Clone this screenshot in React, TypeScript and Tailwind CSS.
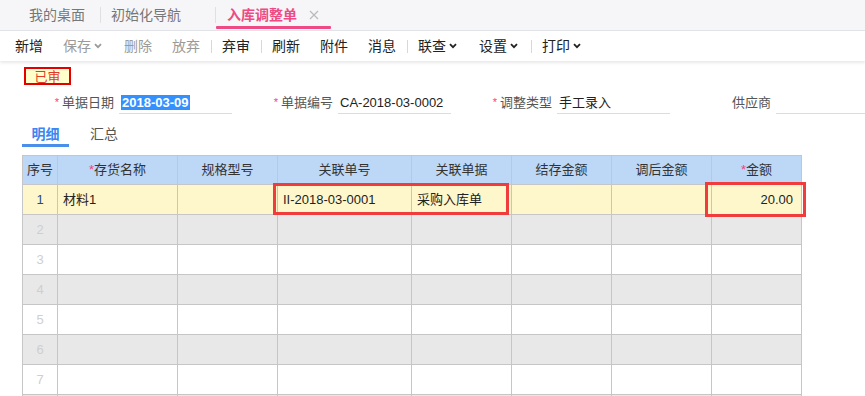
const font = '"Liberation Sans", "Noto Sans CJK SC", sans-serif';

function Chevron() {
  return (
    <svg width="8" height="6" viewBox="0 0 8 6" className="ml-[3px] mr-[2px]">
      <path d="M1 1.2 L4 4.2 L7 1.2" fill="none" stroke="currentColor" strokeWidth="1.8" />
    </svg>
  );
}

type ToolItem = { label: string; disabled?: boolean; menu?: boolean } | 'sep';

const tools: ToolItem[] = [
  { label: '新增' },
  { label: '保存', disabled: true, menu: true },
  { label: '删除', disabled: true },
  { label: '放弃', disabled: true },
  'sep',
  { label: '弃审' },
  'sep',
  { label: '刷新' },
  { label: '附件' },
  { label: '消息' },
  'sep',
  { label: '联查', menu: true },
  { label: '设置', menu: true },
  'sep',
  { label: '打印', menu: true },
];

const columns = [
  { title: '序号', w: 35 },
  { title: '存货名称', w: 120, req: true },
  { title: '规格型号', w: 100 },
  { title: '关联单号', w: 134 },
  { title: '关联单据', w: 100 },
  { title: '结存金额', w: 100 },
  { title: '调后金额', w: 100 },
  { title: '金额', w: 90, req: true },
];

function Field({ label, value, req, selected }: { label: string; value?: string; req?: boolean; selected?: boolean }) {
  return (
    <div className="flex items-center">
      <div className="w-[59px] flex justify-end items-center text-[13px] text-[#555] whitespace-nowrap">
        {req && <span className="text-[#f0457a] text-[11px] mr-[3px] relative top-[-1px]">*</span>}
        <span>{label}</span>
      </div>
      <div className="ml-[5px] w-[113px] h-[22px] border-b border-[#dcdcdc] flex items-center text-[13px] text-[#222] pl-[2px] whitespace-nowrap">
        {value && (
          <span className={selected ? 'bg-[#3390ff] text-white font-bold leading-[15px] px-[1px]' : 'leading-[15px]'}>{value}</span>
        )}
      </div>
    </div>
  );
}

export default function App() {
  const rows = [1, 2, 3, 4, 5, 6, 7, 8];
  return (
    <div className="w-[865px] h-[396px] overflow-hidden bg-white relative" style={{ fontFamily: font }}>
      {/* tab bar */}
      <div className="h-[31px] bg-[#f6f6f8] border-b border-[#e3e3ea] flex items-stretch pl-[29px] text-[14px]">
        <div className="flex items-center text-[#777]">我的桌面</div>
        <div className="w-px h-[16px] bg-[#e0e0e0] self-center ml-[15px]" />
        <div className="flex items-center text-[#777] ml-[10px]">初始化导航</div>
        <div className="w-px h-[16px] bg-[#e0e0e0] self-center ml-[34px]" />
        <div className="relative flex items-center w-[115px] pl-[11px]">
          <span className="text-[#ee4a85] font-bold">入库调整单</span>
          <svg width="10" height="10" viewBox="0 0 10 10" className="ml-[12px]">
            <path d="M1 1 L9 9 M9 1 L1 9" stroke="#bbbbbb" strokeWidth="1.3" />
          </svg>
          <div className="absolute left-0 right-0 bottom-[1px] h-[3px] bg-[#ee4a85] rounded-[1px]" />
        </div>
      </div>

      {/* toolbar */}
      <div className="h-[30px] flex items-center pl-[5px] text-[14px] shadow-[0_2px_3px_rgba(0,0,0,0.09)] relative z-10">
        {tools.map((t, i) =>
          t === 'sep' ? (
            <div key={i} className="w-px h-[13px] bg-[#d8d8d8] ml-[1px]" />
          ) : (
            <div key={i} className={`flex items-center px-[10px] ${t.disabled ? 'text-[#9a9a9a]' : 'text-[#222]'}`}>
              <span>{t.label}</span>
              {t.menu && <Chevron />}
            </div>
          )
        )}
      </div>

      {/* status badge */}
      <div className="mt-[6px] ml-[24px] w-[47px] h-[18px] border-2 border-[#e30000] bg-[#ffffcc] flex items-center justify-center text-[13px] text-[#e03a2a] leading-none">
        已审
      </div>

      {/* header fields */}
      <div className="flex items-center gap-[42px] pl-[55px] mt-[7px]">
        <Field label="单据日期" value="2018-03-09" req selected />
        <Field label="单据编号" value="CA-2018-03-0002" req />
        <Field label="调整类型" value="手工录入" req />
        <Field label="供应商" />
      </div>

      {/* detail tabs */}
      <div className="flex ml-[22px] mt-[7px] h-[26px] text-[14px]">
        <div className="relative w-[47px] h-full flex justify-center pt-[3px]">
          <span className="text-[#3b86f0] font-bold">明细</span>
          <div className="absolute left-0 right-0 bottom-0 h-[3px] bg-[#4a90ea]" />
        </div>
        <div className="ml-[21px] h-full pt-[3px] text-[#555]">汇总</div>
      </div>

      {/* grid */}
      <div className="relative ml-[22px] mt-[8px]">
        <table className="border-collapse text-[13px] table-fixed" style={{ width: 779 }}>
          <colgroup>
            {columns.map((c) => (
              <col key={c.title} style={{ width: c.w }} />
            ))}
          </colgroup>
          <thead>
            <tr className="h-[29px] bg-[#bdd7f6]">
              {columns.map((c) => (
                <th key={c.title} className="border border-[#c6c6c6] font-normal text-[#333] text-center p-0 whitespace-nowrap">
                  {c.req && <span className="text-[#f0457a]">*</span>}
                  {c.title}
                </th>
              ))}
            </tr>
          </thead>
          <tbody>
            {rows.map((r) => {
              const bg = r === 1 ? 'bg-[#fff7cc]' : r % 2 === 0 ? 'bg-[#e8e8e8]' : 'bg-white';
              return (
                <tr key={r} className={`h-[30px] ${bg}`}>
                  <td className={`border border-[#c6c6c6] text-center ${r === 1 ? 'text-[#1f4f7a]' : 'text-[#cfcfcf]'}`}>{r < 8 ? r : ''}</td>
                  <td className="border border-[#c6c6c6] px-[5px] text-[#222]">{r === 1 ? '材料1' : ''}</td>
                  <td className="border border-[#c6c6c6]" />
                  <td className="border border-[#c6c6c6] px-[5px] text-[#222]">{r === 1 ? 'II-2018-03-0001' : ''}</td>
                  <td className="border border-[#c6c6c6] px-[5px] text-[#222]">{r === 1 ? '采购入库单' : ''}</td>
                  <td className="border border-[#c6c6c6]" />
                  <td className="border border-[#c6c6c6]" />
                  <td className="border border-[#c6c6c6] px-[8px] text-right text-[#222]">{r === 1 ? '20.00' : ''}</td>
                </tr>
              );
            })}
          </tbody>
        </table>
        {/* highlight marks */}
        <div className="absolute left-[251px] top-[28px] w-[236px] h-[32px] border-[3px] border-[#f03c3c]" />
        <div className="absolute left-[683px] top-[27px] w-[101px] h-[35px] border-[3px] border-[#f03c3c]" />
      </div>
    </div>
  );
}
